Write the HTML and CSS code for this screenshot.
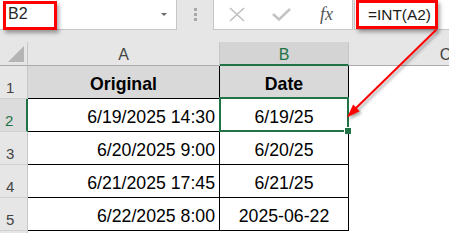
FILE: index.html
```html
<!DOCTYPE html>
<html>
<head>
<meta charset="utf-8">
<link rel="stylesheet" href="styles.css">
</head>
<body>
<div class="app">
  <div class="toolbar">
    <div class="namebox"><span class="ref">B2</span><span class="caret"></span></div>
    <div class="grip"><i></i><i></i><i></i></div>
    <div class="fxbox">
      <span class="tool"><svg width="16" height="15" viewBox="0 0 16 15"><path d="M1 1 L15 14 M15 1 L1 14" stroke="#bfbfbf" stroke-width="1.6" fill="none"/></svg></span>
      <span class="tool"><svg width="19" height="13" viewBox="0 0 19 13"><path d="M1 6 L7 11.5 L18 1" stroke="#c4c4c4" stroke-width="2.6" fill="none"/></svg></span>
      <span class="tool fx">fx</span>
    </div>
    <div class="formula">=INT(A2)</div>
  </div>

  <div class="sheet">
    <div class="corner"><span class="tri"></span></div>
    <div class="colhead">A</div>
    <div class="colhead colsel">B</div>
    <div class="colhead colc">C</div>

    <div class="rowhead">1</div>
    <div class="cell a head">Original</div>
    <div class="cell b head">Date</div>
    <div class="cell c"></div>

    <div class="rowhead rowsel">2</div>
    <div class="cell a">6/19/2025 14:30</div>
    <div class="cell b active">6/19/25<span class="sel"><span class="handle"></span></span></div>
    <div class="cell c"></div>

    <div class="rowhead">3</div>
    <div class="cell a">6/20/2025 9:00</div>
    <div class="cell b">6/20/25</div>
    <div class="cell c"></div>

    <div class="rowhead">4</div>
    <div class="cell a">6/21/2025 17:45</div>
    <div class="cell b">6/21/25</div>
    <div class="cell c"></div>

    <div class="rowhead">5</div>
    <div class="cell a">6/22/2025 8:00</div>
    <div class="cell b">2025-06-22</div>
    <div class="cell c"></div>

    <div class="rowhead last"></div>
    <div class="cell blank"></div>
    <div class="cell blank"></div>
    <div class="cell blank"></div>
  </div>

  <div class="ann ann-name"></div>
  <div class="ann ann-formula"></div>
  <svg class="arrow" width="449" height="233" viewBox="0 0 449 233">
    <line x1="436.5" y1="29.5" x2="355" y2="109" stroke="#ff0000" stroke-width="2"/>
    <polygon points="347,117.5 359.6,111.2 353.2,104.6" fill="#ff0000"/>
  </svg>
</div>
</body>
</html>
```
FILE: styles.css
```css
html, body {
  margin: 0;
  padding: 0;
  background: #ffffff;
}
body {
  width: 449px;
  height: 233px;
  overflow: hidden;
  font-family: "Liberation Sans", Arial, sans-serif;
}
.app {
  position: relative;
  width: 449px;
  height: 233px;
  overflow: hidden;
  background: #ffffff;
}

/* ---------- formula bar ---------- */
.toolbar {
  display: flex;
  align-items: flex-start;
  height: 42px;
  background: #e6e6e6;
}
.namebox {
  box-sizing: border-box;
  width: 177px;
  height: 30px;
  background: #ffffff;
  border-right: 1px solid #c6c6c6;
  border-bottom: 1px solid #c6c6c6;
  display: flex;
  align-items: center;
  justify-content: space-between;
  padding: 0 9px 1px 8px;
}
.ref {
  font-size: 16px;
  color: #262626;
  line-height: 20px;
}
.caret {
  width: 0;
  height: 0;
  border-left: 3px solid transparent;
  border-right: 3px solid transparent;
  border-top: 3px solid #6a6a6a;
  margin-top: 1px;
}
.grip {
  width: 36px;
  height: 29px;
  display: flex;
  flex-direction: column;
  align-items: center;
  justify-content: center;
  gap: 2px;
  padding-bottom: 1px;
  box-sizing: border-box;
}
.grip i {
  display: block;
  width: 3px;
  height: 3px;
  background: #a8a8a8;
}
.fxbox {
  box-sizing: border-box;
  width: 140px;
  height: 30px;
  background: #ffffff;
  border: 1px solid #c6c6c6;
  border-top: none;
  display: flex;
  align-items: center;
}
.tool {
  width: 45px;
  height: 29px;
  display: flex;
  align-items: center;
  justify-content: center;
}
.fx {
  font-family: "Liberation Serif", "Times New Roman", serif;
  font-style: italic;
  font-size: 18px;
  color: #555555;
  line-height: 20px;
  padding-bottom: 1px;
}
.formula {
  box-sizing: border-box;
  flex: 1;
  margin-left: 1px;
  height: 30px;
  background: #ffffff;
  border-left: 1px solid #c6c6c6;
  border-bottom: 1px solid #c6c6c6;
  font-size: 15.4px;
  color: #1a1a1a;
  line-height: 30px;
  padding-left: 13px;
  white-space: nowrap;
}

/* ---------- sheet grid ---------- */
.sheet {
  display: grid;
  grid-template-columns: 28px 192px 129px 193px;
  grid-template-rows: 24px repeat(5, 33px) 12px;
}
.sheet > div {
  box-sizing: border-box;
}
.corner {
  background: #e6e6e6;
  border-right: 1px solid #c6c6c6;
  border-bottom: 1px solid #ababab;
  display: flex;
  justify-content: flex-end;
  align-items: flex-end;
  padding: 0 3px 3px 0;
}
.tri {
  display: block;
  width: 16px;
  height: 16px;
  background: #b4b4b4;
  clip-path: polygon(100% 0, 100% 100%, 0 100%);
}
.colhead {
  background: #e6e6e6;
  border-right: 1px solid #c6c6c6;
  border-bottom: 1px solid #ababab;
  font-size: 16px;
  line-height: 23px;
  color: #444444;
  text-align: center;
  padding-top: 1px;
}
.colsel {
  background: #d4d4d4;
  color: #217346;
  border-bottom: 2px solid #217346;
}
.colc {
  border-right: none;
}
.rowhead {
  background: #e6e6e6;
  border-right: 1px solid #c6c6c6;
  border-bottom: 1px solid #d0d0d0;
  font-size: 15px;
  line-height: 18px;
  color: #444444;
  display: flex;
  align-items: flex-end;
  padding: 0 0 1px 6px;
}
.rowsel {
  background: #dcdcdc;
  color: #217346;
  border-right: 2px solid #217346;
  padding-left: 5px;
}
.rowhead.last {
  border-bottom: none;
}
.cell {
  font-size: 17.7px;
  line-height: 20px;
  color: #000000;
  display: flex;
  align-items: flex-end;
  padding-bottom: 4px;
  white-space: nowrap;
}
.cell.a {
  border-right: 1px solid #000000;
  border-bottom: 1px solid #000000;
  justify-content: flex-end;
  padding-right: 4px;
}
.cell.b {
  border-right: 1px solid #000000;
  border-bottom: 1px solid #000000;
  justify-content: center;
}
.cell.head {
  background: #d9d9d9;
  font-weight: bold;
  justify-content: center;
  padding-right: 0;
}
.cell.c, .cell.blank {
  background: #ffffff;
}
.active {
  position: relative;
}
.sel {
  position: absolute;
  left: -1px;
  top: -2px;
  right: -1px;
  bottom: -1px;
  border: 2px solid #217346;
  box-sizing: border-box;
}
.handle {
  position: absolute;
  right: -4px;
  bottom: -4px;
  width: 6px;
  height: 6px;
  background: #217346;
  box-shadow: -1px -1px 0 0 #ffffff;
}

/* ---------- annotations ---------- */
.ann {
  position: absolute;
  box-sizing: border-box;
  border: 3px solid #ff0000;
  box-shadow: 2px 3px 4px rgba(0, 0, 0, 0.35);
}
.ann-name {
  left: 3px;
  top: 1px;
  width: 54px;
  height: 29px;
}
.ann-formula {
  left: 356px;
  top: 0;
  width: 82px;
  height: 29px;
}
.arrow {
  position: absolute;
  left: 0;
  top: 0;
  pointer-events: none;
  filter: drop-shadow(2px 2px 1.5px rgba(0, 0, 0, 0.35));
}
```
